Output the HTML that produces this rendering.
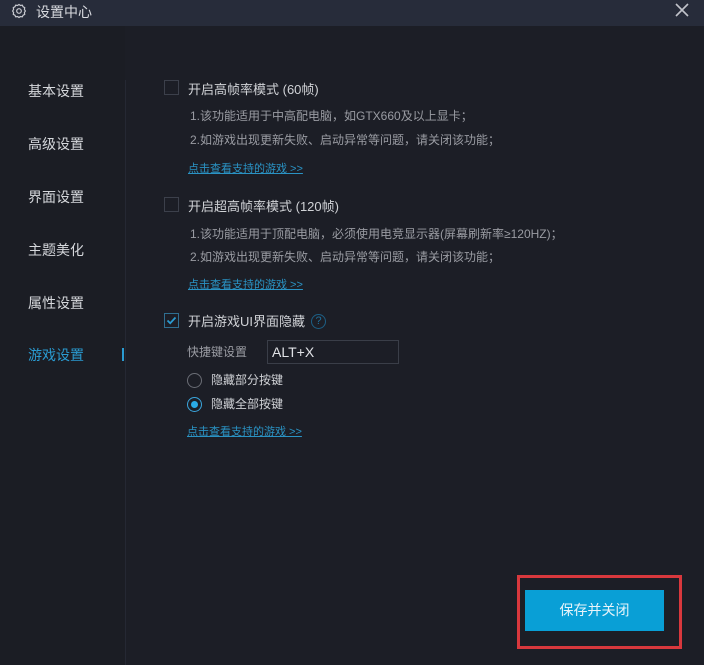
<!DOCTYPE html>
<html><head><meta charset="utf-8"><style>
*{margin:0;padding:0;box-sizing:border-box}
body{width:704px;height:665px;background:#1c1e26;font-family:"Liberation Sans","Noto Sans CJK SC",sans-serif;position:relative;overflow:hidden;color:#d0d2d6}
.tb{position:absolute;left:0;top:0;width:704px;height:26px;background:#272c3a}
.tb .t{position:absolute;left:36px;top:2px;font-size:14px;color:#d8dadf}
.side{position:absolute;left:0;top:26px;width:125px;height:639px;background:#1b1d24}
.div{position:absolute;left:125px;top:80px;width:1px;height:585px;background:#252833}
.nav{position:absolute;left:28px;font-size:14px;color:#d6d8dc}
.ab{position:absolute;font-size:13px;color:#d0d2d6}
.sm{position:absolute;font-size:12px;color:#9a9ca3}
.lk{position:absolute;font-size:11px;color:#2a93c4;text-decoration:underline}
.cb{position:absolute;width:15px;height:15px;border:1px solid #3c404b}
.rd{position:absolute;width:15px;height:15px;border:1.5px solid #6a6d75;border-radius:50%}
</style></head><body>
<div class="tb">
<svg style="position:absolute;left:11px;top:3px" width="16" height="16" viewBox="0 0 16 16"><path d="M8 1.5l1.5 1 1.8-.3.8 1.6 1.6.8-.3 1.8 1 1.6-1 1.6.3 1.8-1.6.8-.8 1.6-1.8-.3L8 14.5l-1.5-1-1.8.3-.8-1.6-1.6-.8.3-1.8-1-1.6 1-1.6-.3-1.8 1.6-.8.8-1.6 1.8.3z" fill="none" stroke="#c8cad0" stroke-width="1.2"/><circle cx="8" cy="8" r="2.3" fill="none" stroke="#c8cad0" stroke-width="1.2"/></svg>
<div class="t">设置中心</div>
<svg style="position:absolute;left:674px;top:2px" width="16" height="16" viewBox="0 0 16 16"><path d="M2 2L14 14M14 2L2 14" stroke="#c0c3ca" stroke-width="1.6"/></svg>
</div>
<div class="side"></div><div class="div"></div>
<div class="nav" style="top:81px">基本设置</div>
<div class="nav" style="top:134px">高级设置</div>
<div class="nav" style="top:187px">界面设置</div>
<div class="nav" style="top:240px">主题美化</div>
<div class="nav" style="top:293px">属性设置</div>
<div class="nav" style="top:345px;color:#2a9bd1">游戏设置</div>
<div style="position:absolute;left:122px;top:348px;width:2px;height:13px;background:#2a9bd1"></div>

<div class="cb" style="left:164px;top:80px"></div>
<div class="ab" style="left:188px;top:79px">开启高帧率模式 (60帧)</div>
<div class="sm" style="left:190px;top:107px">1.该功能适用于中高配电脑，如GTX660及以上显卡；</div>
<div class="sm" style="left:190px;top:131px">2.如游戏出现更新失败、启动异常等问题，请关闭该功能；</div>
<div class="lk" style="left:188px;top:160px">点击查看支持的游戏 &gt;&gt;</div>

<div class="cb" style="left:164px;top:197px"></div>
<div class="ab" style="left:188px;top:196px">开启超高帧率模式 (120帧)</div>
<div class="sm" style="left:190px;top:225px">1.该功能适用于顶配电脑，必须使用电竞显示器(屏幕刷新率≥120HZ)；</div>
<div class="sm" style="left:190px;top:248px">2.如游戏出现更新失败、启动异常等问题，请关闭该功能；</div>
<div class="lk" style="left:188px;top:276px">点击查看支持的游戏 &gt;&gt;</div>

<div class="cb" style="left:164px;top:313px;border-color:#2f6f91"><svg width="13" height="13" viewBox="0 0 13 13"><path d="M2.5 6.5l2.7 2.7L10.5 3.5" fill="none" stroke="#2a9bd1" stroke-width="1.8"/></svg></div>
<div class="ab" style="left:188px;top:311px">开启游戏UI界面隐藏</div>
<div style="position:absolute;left:311px;top:314px;width:15px;height:15px;border:1.3px solid #1d5f85;border-radius:50%;color:#1f6f9a;font-size:11px;text-align:center;line-height:13px">?</div>
<div class="sm" style="left:187px;top:343px">快捷键设置</div>
<div style="position:absolute;left:267px;top:340px;width:132px;height:24px;border:1px solid #3a3e48;font-size:14px;color:#e0e2e6;padding:3px 0 0 4px">ALT+X</div>
<div class="rd" style="left:187px;top:373px"></div>
<div class="ab" style="left:211px;top:371px;font-size:12px">隐藏部分按键</div>
<div class="rd" style="left:187px;top:397px;border-color:#3aa5dc"><div style="position:absolute;left:2.5px;top:2.5px;width:7px;height:7px;border-radius:50%;background:#2aaae6"></div></div>
<div class="ab" style="left:211px;top:395px;font-size:12px">隐藏全部按键</div>
<div class="lk" style="left:187px;top:423px">点击查看支持的游戏 &gt;&gt;</div>

<div style="position:absolute;left:517px;top:575px;width:165px;height:74px;border:3px solid #d8383d"></div>
<div style="position:absolute;left:525px;top:590px;width:139px;height:41px;background:#099fd6;color:#e8f4fa;font-size:14px;text-align:center;line-height:41px">保存并关闭</div>
</body></html>
